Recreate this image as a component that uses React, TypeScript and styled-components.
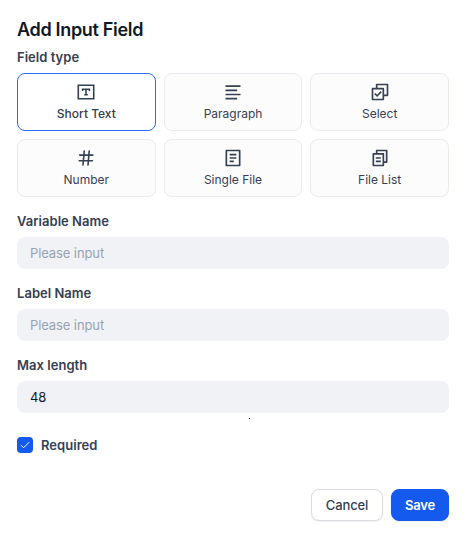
import React, { useState } from 'react';
import styled, { createGlobalStyle } from 'styled-components';
import {
  RiAlignLeft,
  RiCheckboxMultipleLine,
  RiFileCopy2Line,
  RiFileList2Line,
} from 'react-icons/ri';

const GlobalStyle = createGlobalStyle`
  * { box-sizing: border-box; }
  body { margin: 0; background: #fff; }
  button, input { font-family: inherit; }
`;

const Dialog = styled.main`
  position: relative;
  width: 466px;
  height: 534px;
  padding: 16px 17px 13px;
  display: flex;
  flex-direction: column;
  background: #fff;
  color: #354052;
  font-family: Inter, 'Liberation Sans', sans-serif;
`;

const Title = styled.h1`
  margin: 0;
  font-size: 18px;
  line-height: 28px;
  font-weight: 600;
  letter-spacing: -0.32px;
  color: #101828;
`;

const Label = styled.label`
  display: block;
  font-size: 13px;
  line-height: 24px;
  font-weight: 600;
  letter-spacing: 0.03px;
`;

const TypeGrid = styled.div`
  display: grid;
  grid-template-columns: repeat(3, 1fr);
  gap: 8px;
  margin-top: 4px;
`;

const TypeCard = styled.button<{ $selected: boolean }>`
  height: 58px;
  padding: 8px 0;
  display: flex;
  flex-direction: column;
  align-items: center;
  gap: 4px;
  border: 1px solid ${p => (p.$selected ? '#296dff' : '#e9ebf0')};
  border-radius: 8px;
  background: ${p => (p.$selected ? '#fff' : '#fcfcfd')};
  color: #354052;
  font-size: 12px;
  line-height: 16px;
  font-weight: ${p => (p.$selected ? 500 : 400)};
  letter-spacing: 0;
  svg { display: block; flex: none; }
`;

const Field = styled.div`
  margin-top: 12px;
`;

const Input = styled.input`
  display: block;
  width: 100%;
  height: 32px;
  margin-top: 4px;
  padding: 0 13px;
  border: 0;
  outline: 0;
  border-radius: 8px;
  background: #f1f2f6;
  color: #101828;
  font-size: 13px;
  letter-spacing: -0.1px;
  &::placeholder { color: #98a2b2; opacity: 1; }
`;

const Speck = styled.span`
  position: absolute;
  left: 249px;
  top: 418px;
  width: 1px;
  height: 1px;
  background: #000;
`;

const RequiredRow = styled.div`
  display: flex;
  align-items: center;
  gap: 8px;
  height: 24px;
  margin-top: 20px;
`;

const Checkbox = styled.button`
  width: 16px;
  height: 16px;
  padding: 2px;
  border: 0;
  border-radius: 4px;
  background: #155aef;
  svg { display: block; }
`;

const Footer = styled.footer`
  display: flex;
  justify-content: flex-end;
  gap: 8px;
  margin-top: auto;
`;

const Action = styled.button<{ $primary?: boolean }>`
  width: ${p => (p.$primary ? 58 : 72)}px;
  height: 32px;
  padding: 0;
  border: 1px solid ${p => (p.$primary ? '#155aef' : '#d9dbe1')};
  border-radius: 8px;
  background: ${p => (p.$primary ? '#155aef' : '#fff')};
  box-shadow: 0 1px 2px rgba(16, 24, 40, 0.06);
  color: ${p => (p.$primary ? '#fff' : '#354052')};
  font-size: 13px;
  font-weight: ${p => (p.$primary ? 600 : 500)};
  letter-spacing: ${p => (p.$primary ? '-0.2px' : '-0.1px')};
`;

const TypeLabel = styled(Label)`
  padding-top: 1px;
`;

const TextBoxIcon = () => (
  <svg width="20" height="20" viewBox="0 0 20 20" fill="none" stroke="currentColor" strokeWidth="1.6">
    <path d="M2.3 3.3h15.4v13.4H2.3z" />
    <path d="M6.6 9V7.3h6.8V9M10 7.3v5.4M8.2 12.7h3.6" />
  </svg>
);

const HashIcon = () => (
  <svg width="20" height="20" viewBox="0 0 20 20" fill="none" stroke="currentColor" strokeWidth="1.6" strokeLinecap="round">
    <path d="M3.6 7.1h13.2M3.2 12.7h13.2M8.2 3 7 17M13.2 3 12 17" />
  </svg>
);

const types = [
  { name: 'Short Text', icon: <TextBoxIcon /> },
  { name: 'Paragraph', icon: <RiAlignLeft size={20} /> },
  { name: 'Select', icon: <RiCheckboxMultipleLine size={20} /> },
  { name: 'Number', icon: <HashIcon /> },
  { name: 'Single File', icon: <RiFileList2Line size={20} /> },
  { name: 'File List', icon: <RiFileCopy2Line size={20} /> },
];

export default function App() {
  const [selected, setSelected] = useState('Short Text');
  const [required, setRequired] = useState(true);
  return (
    <>
      <GlobalStyle />
      <Dialog>
        <Title>Add Input Field</Title>
        <TypeLabel as="div">Field type</TypeLabel>
        <TypeGrid>
          {types.map(t => (
            <TypeCard key={t.name} $selected={t.name === selected} onClick={() => setSelected(t.name)}>
              {t.icon}
              {t.name}
            </TypeCard>
          ))}
        </TypeGrid>
        <Field>
          <Label htmlFor="variable">Variable Name</Label>
          <Input id="variable" placeholder="Please input" />
        </Field>
        <Field>
          <Label htmlFor="label">Label Name</Label>
          <Input id="label" placeholder="Please input" />
        </Field>
        <Field>
          <Label htmlFor="max">Max length</Label>
          <Input id="max" defaultValue="48" />
        </Field>
        <Speck />
        <RequiredRow>
          <Checkbox role="checkbox" aria-checked={required} aria-label="Required" onClick={() => setRequired(!required)}>
            {required && (
              <svg width="12" height="12" viewBox="0 0 12 12" fill="none" stroke="#fff">
                <path d="M2 6.2 4.6 8.8 10.2 3.2" />
              </svg>
            )}
          </Checkbox>
          <Label as="span">Required</Label>
        </RequiredRow>
        <Footer>
          <Action>Cancel</Action>
          <Action $primary>Save</Action>
        </Footer>
      </Dialog>
    </>
  );
}
